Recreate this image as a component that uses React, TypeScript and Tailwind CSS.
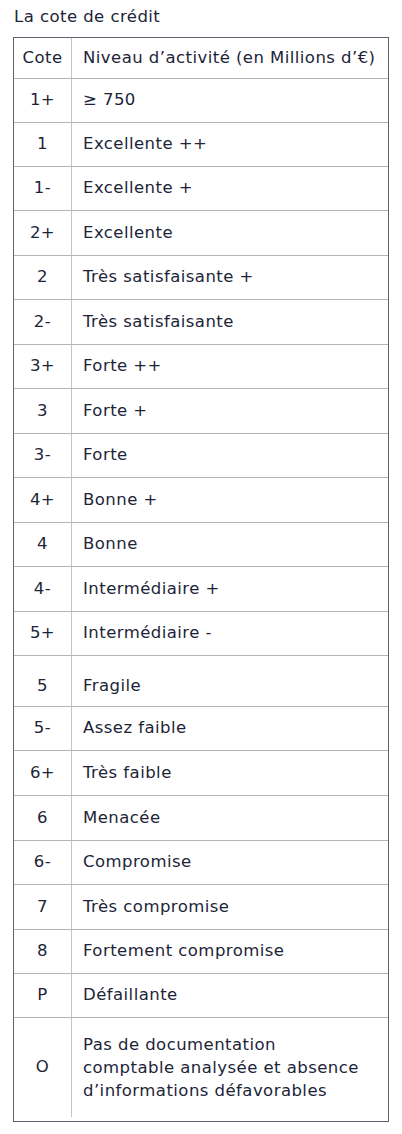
import React from 'react';

const rows = [
  { cote: '1+', label: '≥ 750', h: 'h-[44px]' },
  { cote: '1', label: 'Excellente ++', h: 'h-[44px]' },
  { cote: '1-', label: 'Excellente +', h: 'h-[44px]' },
  { cote: '2+', label: 'Excellente', h: 'h-[45px]' },
  { cote: '2', label: 'Très satisfaisante +', h: 'h-[44px]' },
  { cote: '2-', label: 'Très satisfaisante', h: 'h-[45px]' },
  { cote: '3+', label: 'Forte ++', h: 'h-[44px]' },
  { cote: '3', label: 'Forte +', h: 'h-[45px]' },
  { cote: '3-', label: 'Forte', h: 'h-[44px]' },
  { cote: '4+', label: 'Bonne +', h: 'h-[45px]' },
  { cote: '4', label: 'Bonne', h: 'h-[44px]' },
  { cote: '4-', label: 'Intermédiaire +', h: 'h-[45px]' },
  { cote: '5+', label: 'Intermédiaire -', h: 'h-[44px]' },
  { cote: '5', label: 'Fragile', h: 'h-[51px]', pad: 'pt-[11px]' },
  { cote: '5-', label: 'Assez faible', h: 'h-[44px]' },
  { cote: '6+', label: 'Très faible', h: 'h-[45px]' },
  { cote: '6', label: 'Menacée', h: 'h-[45px]' },
  { cote: '6-', label: 'Compromise', h: 'h-[44px]' },
  { cote: '7', label: 'Très compromise', h: 'h-[45px]' },
  { cote: '8', label: 'Fortement compromise', h: 'h-[44px]' },
  { cote: 'P', label: 'Défaillante', h: 'h-[44px]' },
];

export default function App() {
  return (
    <div className="w-[402px] h-[1134px] bg-white text-[#1c2537] font-['DejaVu_Sans',sans-serif] text-[16.5px] tracking-[0.45px]">
      <div className="pt-[6px] pl-[14px] h-[37px] leading-[22px] text-[16.5px]">La cote de crédit</div>
      <div className="mx-[13px] w-[376px] border border-[#5b6270]">
        {/* Header */}
        <div className="flex h-[41px] border-b border-[#b5b5b5]">
          <div className="w-[58px] flex items-center justify-center border-r border-[#c4c4c4]">Cote</div>
          <div className="flex-1 flex items-center pl-[11px] whitespace-nowrap">Niveau d’activité (en Millions d’€)</div>
        </div>
        {rows.map((row, i) => (
          <div key={i} className={`flex ${row.h} border-b border-[#b5b5b5]`}>
            <div className={`w-[58px] flex items-center justify-center border-r border-[#c4c4c4] ${row.pad ?? ''}`}>{row.cote}</div>
            <div className={`flex-1 flex items-center pl-[11px] ${row.pad ?? ''}`}>{row.label}</div>
          </div>
        ))}
        <div className="flex h-[103px]">
          <div className="w-[58px] flex items-center justify-center border-r border-[#c4c4c4] mb-[4px]">O</div>
          <div className="flex-1 flex items-center pl-[11px] leading-[23px] pb-[4px]">
            <p>
              Pas de documentation
              <br />
              comptable analysée et absence
              <br />
              d’informations défavorables
            </p>
          </div>
        </div>
      </div>
    </div>
  );
}
